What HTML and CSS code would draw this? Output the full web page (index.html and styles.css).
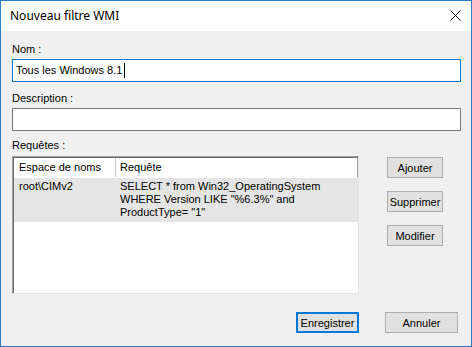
FILE: index.html
```html
<!DOCTYPE html>
<html lang="fr">
<head>
    <meta charset="UTF-8">
    <title>Nouveau filtre WMI</title>
    <link rel="stylesheet" href="styles.css">
</head>
<body>
    <div class="dialog">
        <div class="titlebar">
            <span class="title">Nouveau filtre WMI</span>
            <svg class="close" width="11" height="11" viewBox="0 0 11 11">
                <path d="M0.5 0.5 L10.5 10.5 M10.5 0.5 L0.5 10.5" stroke="#000" stroke-width="1" fill="none"/>
            </svg>
        </div>

        <div class="content">
            <div class="label label-nom">Nom :</div>
            <div class="textbox focused">Tous les Windows 8.1<span class="caret"></span></div>

            <div class="label label-desc">Description :</div>
            <div class="textbox"></div>

            <div class="label label-req">Requêtes :</div>
            <div class="queries">
                <div class="listview">
                    <div class="lv-header">
                        <div class="col-ns">Espace de noms</div>
                        <div class="col-q">Requête</div>
                    </div>
                    <div class="lv-row selected">
                        <div class="col-ns">root\CIMv2</div>
                        <div class="col-q">SELECT * from Win32_OperatingSystem<br>WHERE Version LIKE "%6.3%" and<br>ProductType= "1"</div>
                    </div>
                </div>
                <div class="side-buttons">
                    <button class="btn">Ajouter</button>
                    <button class="btn">Supprimer</button>
                    <button class="btn">Modifier</button>
                </div>
            </div>

            <div class="footer">
                <button class="btn btn-default">Enregistrer</button>
                <button class="btn btn-cancel">Annuler</button>
            </div>
        </div>
    </div>
</body>
</html>
```

FILE: styles.css
```css
html, body {
    margin: 0;
    padding: 0;
    background: #ffffff;
}
.dialog {
    width: 472px;
    height: 347px;
    box-sizing: border-box;
    border: 1px solid #2b7bcb;
    background: #f0f0f0;
    display: flex;
    flex-direction: column;
    font-family: "Liberation Sans", Arial, sans-serif;
    font-size: 11px;
    color: #000;
}
.titlebar {
    height: 30px;
    background: #ffffff;
    display: flex;
    align-items: center;
    justify-content: space-between;
    padding: 0 10px 0 9px;
}
.title {
    font-family: "Noto Sans", "Open Sans", sans-serif;
    font-size: 12px;
    margin-top: -1px;
}
.close {
    display: block;
    margin-top: -1px;
}
.content {
    flex: 1;
    padding: 12px 10px 0 11px;
    display: flex;
    flex-direction: column;
}
.label {
    line-height: 13px;
    height: 13px;
}
.label-desc {
    margin-top: 10px;
}
.label-req {
    margin-top: 8px;
}
.textbox {
    height: 23px;
    box-sizing: border-box;
    border: 1px solid #7a7a7a;
    background: #ffffff;
    margin-top: 3px;
    padding: 0 0 0 3px;
    line-height: 21px;
    display: flex;
    align-items: center;
}
.textbox.focused {
    border-color: #0078d7;
}
.caret {
    display: inline-block;
    width: 1px;
    height: 15px;
    background: #000;
    margin-left: 2px;
}
.queries {
    display: flex;
    margin-top: 4px;
}
.listview {
    width: 347px;
    height: 138px;
    box-sizing: border-box;
    background: #ffffff;
    border-top: 1px solid #a0a0a0;
    border-left: 1px solid #a0a0a0;
    border-right: 1px solid #e3e3e3;
    border-bottom: 1px solid #e3e3e3;
    box-shadow: inset 1px 1px 0 #696969;
    padding: 1px 0 0 1px;
}
.lv-header {
    display: flex;
    height: 19px;
    line-height: 19px;
    border-bottom: 1px solid #ffffff;
    border-right: 1px solid #a0a0a0;
}
.lv-header .col-ns {
    border-right: 1px solid #c8c8c8;
}
.col-ns {
    width: 102px;
    flex: none;
    box-sizing: border-box;
    padding-left: 5px;
}
.col-q {
    padding-left: 4px;
}
.lv-row {
    display: flex;
    line-height: 13px;
    padding: 2px 0 3px;
}
.lv-row.selected {
    background: #e5e5e5;
}
.side-buttons {
    display: flex;
    flex-direction: column;
    margin-left: 28px;
    padding-top: 1px;
    gap: 13px;
}
.btn {
    font-family: "Liberation Sans", Arial, sans-serif;
    font-size: 11px;
    color: #000;
    background: #e1e1e1;
    border: 1px solid #adadad;
    height: 21px;
    padding: 0;
    margin: 0;
    box-sizing: border-box;
}
.side-buttons .btn {
    width: 56px;
}
.footer {
    display: flex;
    justify-content: flex-end;
    margin-top: 18px;
    padding-right: 3px;
    gap: 26px;
}
.btn-default {
    width: 63px;
    border: 2px solid #0078d7;
}
.btn-cancel {
    width: 73px;
}
```
